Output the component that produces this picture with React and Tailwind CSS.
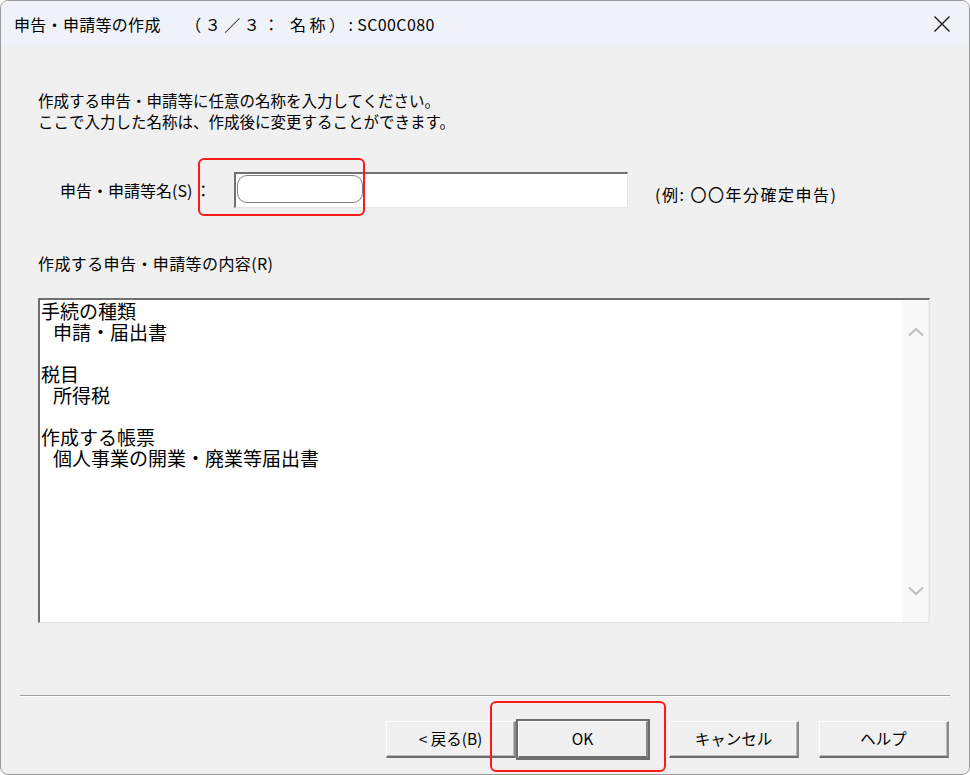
import React from 'react';

const jp = { fontFamily: '"Noto Sans CJK JP", "Noto Sans", sans-serif' };

const Btn = ({ label, primary }) => (
    <div className={`relative w-[130px] h-[37px] flex items-center justify-center bg-[#f0f0f0] text-[15.5px] text-black border-t border-l border-t-white border-l-white border-b-2 border-r-2 border-b-[#6d6d6d] border-r-[#8a8a8a] ${primary ? 'outline outline-2 outline-[#6d6d6d]' : 'shadow-[inset_-1px_-1px_0_#bcbcbc]'}`}>
        {label}
    </div>
);

export default function App() {
    return (
        <div style={jp} className="w-[970px] h-[775px] bg-[#f0f0f0] border border-[#9a9a9a] rounded-lg overflow-hidden relative text-black">
            {/* title bar */}
            <div className="h-[45px] flex items-center justify-between pl-[13px] pr-[16px] bg-[#eff3f9]">
                <span className="text-[16px]">
                    <span className="tracking-[0.3px]">申告・申請等の作成　　</span>
                    <span className="tracking-[3.5px]">（３／３： 名称）</span>
                    <span className="tracking-[0.4px]">: SC00C080</span>
                </span>
                <svg width="18" height="18" viewBox="0 0 18 18" className="mr-[2px]">
                    <path d="M1.5 1.5 L16.5 16.5 M16.5 1.5 L1.5 16.5" stroke="#1a1a1a" strokeWidth="1.4" />
                </svg>
            </div>

            <div className="pt-[44px]">
                <div className="pl-[37px] text-[15.5px] leading-[21px]">
                    <div>作成する申告・申請等に任意の名称を入力してください。</div>
                    <div>ここで入力した名称は、作成後に変更することができます。</div>
                </div>

                {/* name row */}
                <div className="mt-[40px] flex items-center pl-[59px]">
                    <span className="w-[174px] text-[16px]">申告・申請等名(S)<span className="ml-[3px]">：</span></span>
                    <div className="w-[394px] h-[36px] bg-white border-t-2 border-l-2 border-t-[#707070] border-l-[#707070] border-b border-r border-b-[#e6e6e6] border-r-[#e6e6e6] pt-[1px] pl-[1px]">
                        <div className="w-[126px] h-[28px] rounded-[10px] border border-[#808080] bg-white"></div>
                    </div>
                    <span className="ml-[27px] mt-[8px] text-[16px] tracking-[1.5px]">(例: 〇〇年分確定申告)</span>
                </div>

                <div className="mt-[45px] pl-[37px] text-[16px] tracking-[0.4px] leading-[21px]">作成する申告・申請等の内容(R)</div>

                {/* content box */}
                <div className="mt-[24px] ml-[37px] w-[892px] h-[325px] bg-white flex border-t-2 border-l-2 border-t-[#707070] border-l-[#707070] border-b border-r border-b-[#e3e3e3] border-r-[#e3e3e3]">
                    <div className="flex-1 pl-[1px] text-[19px] leading-[21px]">
                        <div>手続の種類</div>
                        <div className="pl-[12px]">申請・届出書</div>
                        <div>&nbsp;</div>
                        <div>税目</div>
                        <div className="pl-[12px]">所得税</div>
                        <div>&nbsp;</div>
                        <div>作成する帳票</div>
                        <div className="pl-[12px]">個人事業の開業・廃業等届出書</div>
                    </div>
                    <div className="w-[26px] bg-[#f8f8f8] border-r border-[#ececec] flex flex-col items-center justify-between pt-[27px] pb-[26px]">
                        <svg width="18" height="10" viewBox="0 0 18 10">
                            <path d="M2 8.5 L9 2 L16 8.5" stroke="#c2c2c2" strokeWidth="2.2" fill="none" />
                        </svg>
                        <svg width="18" height="10" viewBox="0 0 18 10">
                            <path d="M2 1.5 L9 8 L16 1.5" stroke="#c2c2c2" strokeWidth="2.2" fill="none" />
                        </svg>
                    </div>
                </div>

                <div className="mt-[72px] mx-[19px] h-[2px] border-t border-t-[#a0a0a0] border-b border-b-white"></div>

                {/* buttons */}
                <div className="mt-[24px] flex justify-end pr-[20px]">
                    <Btn label="< 戻る(B)" />
                    <div className="ml-[2px]"><Btn label="OK" primary /></div>
                    <div className="ml-[21px]"><Btn label="キャンセル" /></div>
                    <div className="ml-[20px]"><Btn label="ヘルプ" /></div>
                </div>
            </div>

            {/* annotation marks */}
            <div className="absolute left-[197px] top-[157px] w-[167px] h-[58px] border-2 border-[#ff1a1a] rounded-[6px]"></div>
            <div className="absolute left-[489px] top-[700px] w-[176px] h-[71px] border-2 border-[#ff1a1a] rounded-[6px]"></div>
        </div>
    );
}
